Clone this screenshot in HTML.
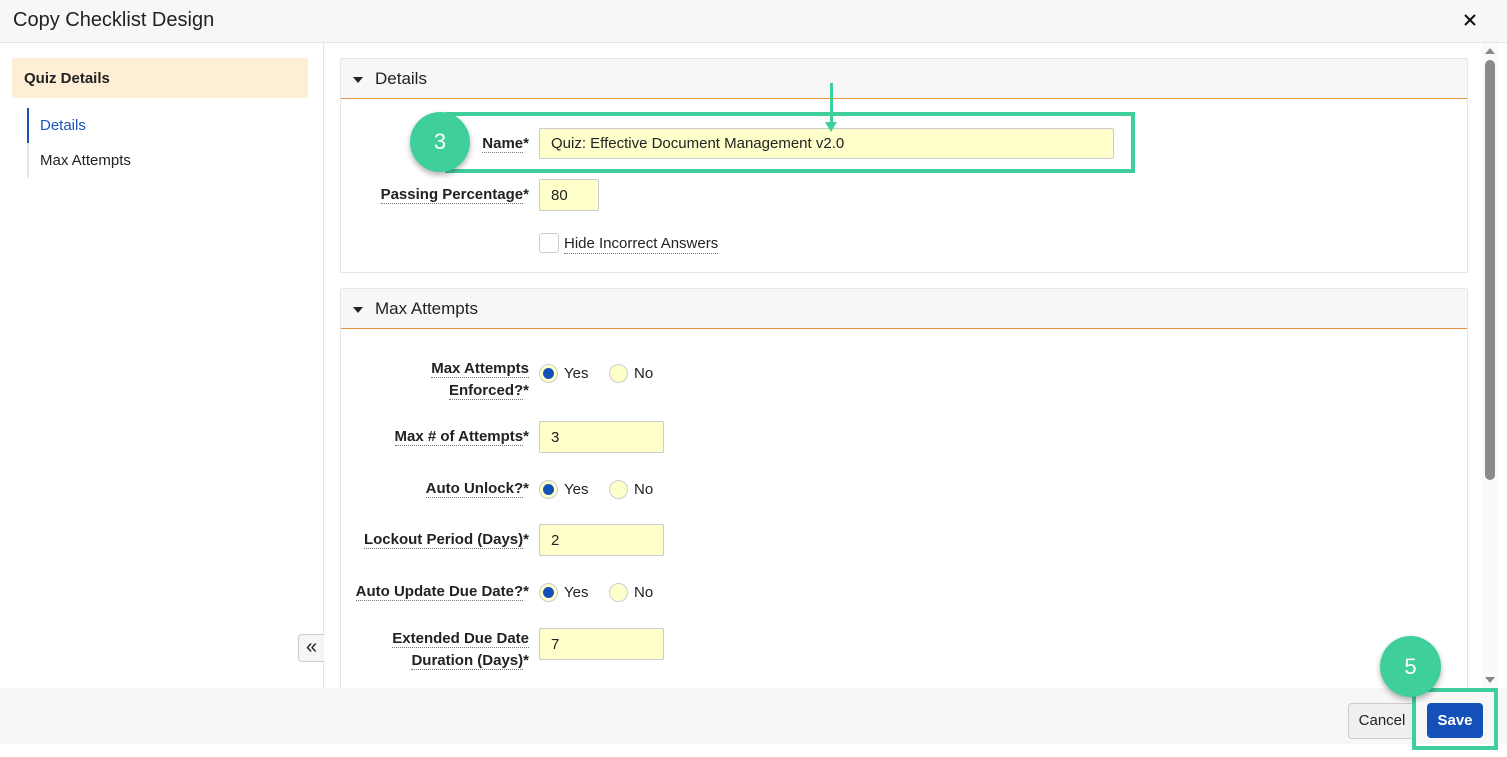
<!DOCTYPE html>
<html><head><meta charset="utf-8"><style>
*{box-sizing:border-box;margin:0;padding:0}
body{width:1507px;height:757px;overflow:hidden;background:#fff;font-family:"Liberation Sans",Arial,sans-serif;color:#222;position:relative;font-size:15px}
.a{position:absolute}
.lbl{position:absolute;right:978px;text-align:right;font-weight:bold;font-size:15px;line-height:22px;color:#222}
.lbl span{border-bottom:1px dotted #777}
.inp{position:absolute;left:539px;background:#ffffcc;border:1px solid #ccc;border-radius:2px;font-size:15px;padding-left:11px;display:flex;align-items:center}
.radio{position:absolute;width:19px;height:19px;border-radius:50%;border:1px solid #ccc;background:#ffffcc}
.radio.on::after{content:"";position:absolute;left:3px;top:3px;width:11px;height:11px;border-radius:50%;background:#1550b8}
.rt{position:absolute;font-size:15px}
.tri{position:absolute;width:0;height:0;border-left:5px solid transparent;border-right:5px solid transparent;border-top:6px solid #222}
</style></head><body>
<div class="a" style="left:0;top:0;width:1507px;height:43px;background:#f7f7f7;border-bottom:1px solid #e6e6e6"></div>
<div class="a" style="left:13px;top:9px;font-size:20px;color:#222">Copy Checklist Design</div>
<svg class="a" style="left:1464px;top:14px" width="12" height="12" viewBox="0 0 12 12"><path d="M1 1L11 11M11 1L1 11" stroke="#111" stroke-width="2"/></svg>
<div class="a" style="left:323px;top:43px;width:1px;height:645px;background:#e6e6e6"></div>
<div class="a" style="left:12px;top:58px;width:296px;height:40px;background:#feeed5;border-radius:2px"></div>
<div class="a" style="left:24px;top:70px;font-weight:bold;font-size:15px">Quiz Details</div>
<div class="a" style="left:27px;top:108px;width:2px;height:70px;background:#e6e6e6"></div>
<div class="a" style="left:27px;top:108px;width:2px;height:35px;background:#1550b8"></div>
<div class="a" style="left:40px;top:117px;font-size:15px;color:#1a55b8">Details</div>
<div class="a" style="left:40px;top:152px;font-size:15px">Max Attempts</div>
<div class="a" style="left:298px;top:634px;width:26px;height:28px;border:1px solid #ccc;border-right:none;border-radius:4px 0 0 4px;background:#f5f5f5;font-size:20px;text-align:center;line-height:24px">«</div>

<div class="a" style="left:340px;top:58px;width:1128px;height:215px;border:1px solid #e6e6e6;border-radius:2px"></div>
<div class="a" style="left:341px;top:59px;width:1126px;height:40px;background:#f7f7f7;border-bottom:1px solid #e8963f"></div>
<div class="tri" style="left:353px;top:77px"></div>
<div class="a" style="left:375px;top:69px;font-size:17px">Details</div>

<div class="a" style="left:340px;top:288px;width:1128px;height:420px;border:1px solid #e6e6e6;border-radius:2px"></div>
<div class="a" style="left:341px;top:289px;width:1126px;height:40px;background:#f7f7f7;border-bottom:1px solid #e8963f"></div>
<div class="tri" style="left:353px;top:307px"></div>
<div class="a" style="left:375px;top:299px;font-size:17px">Max Attempts</div>

<div class="lbl" style="top:133px"><span>Name</span>*</div>
<div class="inp" style="top:128px;width:575px;height:31px">Quiz: Effective Document Management v2.0</div>
<div class="lbl" style="top:184px"><span>Passing Percentage</span>*</div>
<div class="inp" style="top:179px;width:60px;height:32px">80</div>
<div class="a" style="left:539px;top:233px;width:20px;height:20px;border:1px solid #ccc;border-radius:3px;background:#fff"></div>
<div class="a" style="left:564px;top:235px;font-size:15px;border-bottom:1px dotted #777;line-height:18px">Hide Incorrect Answers</div>

<div class="lbl" style="top:358px"><span>Max Attempts</span><br><span>Enforced?</span>*</div>
<div class="radio on" style="left:539px;top:364px"></div><div class="rt" style="left:564px;top:365px">Yes</div>
<div class="radio" style="left:609px;top:364px"></div><div class="rt" style="left:634px;top:365px">No</div>
<div class="lbl" style="top:426px"><span>Max # of Attempts</span>*</div>
<div class="inp" style="top:421px;width:125px;height:32px">3</div>
<div class="lbl" style="top:478px"><span>Auto Unlock?</span>*</div>
<div class="radio on" style="left:539px;top:480px"></div><div class="rt" style="left:564px;top:481px">Yes</div>
<div class="radio" style="left:609px;top:480px"></div><div class="rt" style="left:634px;top:481px">No</div>
<div class="lbl" style="top:529px"><span>Lockout Period (Days)</span>*</div>
<div class="inp" style="top:524px;width:125px;height:32px">2</div>
<div class="lbl" style="top:581px"><span>Auto Update Due Date?</span>*</div>
<div class="radio on" style="left:539px;top:583px"></div><div class="rt" style="left:564px;top:584px">Yes</div>
<div class="radio" style="left:609px;top:583px"></div><div class="rt" style="left:634px;top:584px">No</div>
<div class="lbl" style="top:628px"><span>Extended Due Date</span><br><span>Duration (Days)</span>*</div>
<div class="inp" style="top:628px;width:125px;height:32px">7</div>

<div class="a" style="left:0;top:688px;width:1507px;height:56px;background:#f7f7f7"></div>
<div class="a" style="left:1348px;top:703px;width:68px;height:36px;border:1px solid #ccc;border-radius:4px;background:#efefef;font-size:15px;text-align:center;line-height:34px">Cancel</div>
<div class="a" style="left:1427px;top:703px;width:56px;height:35px;border-radius:4px;background:#1550b8;color:#fff;font-size:15px;font-weight:bold;text-align:center;line-height:35px">Save</div>

<div class="a" style="left:1482px;top:43px;width:16px;height:645px;background:#fafafa"></div>
<div class="a" style="left:1485px;top:48px;width:0;height:0;border-left:5px solid transparent;border-right:5px solid transparent;border-bottom:6px solid #888"></div>
<div class="a" style="left:1485px;top:60px;width:10px;height:420px;background:#8a8a8a;border-radius:5px"></div>
<div class="a" style="left:1485px;top:677px;width:0;height:0;border-left:5px solid transparent;border-right:5px solid transparent;border-top:6px solid #888"></div>

<div class="a" style="left:445px;top:112px;width:690px;height:61px;border:4px solid #3ecf9b"></div>
<div class="a" style="left:830px;top:83px;width:3px;height:45px;background:#3ecf9b"></div>
<div class="a" style="left:825px;top:122px;width:0;height:0;border-left:6px solid transparent;border-right:6px solid transparent;border-top:10px solid #3ecf9b"></div>
<div class="a" style="left:410px;top:112px;width:60px;height:60px;border-radius:50%;background:#3ecf9b;color:#fff;font-size:22px;text-align:center;line-height:60px;box-shadow:0 3px 6px rgba(0,0,0,.3)">3</div>
<div class="a" style="left:1412px;top:688px;width:86px;height:62px;border:4px solid #3ecf9b"></div>
<div class="a" style="left:1380px;top:636px;width:61px;height:61px;border-radius:50%;background:#3ecf9b;color:#fff;font-size:22px;text-align:center;line-height:61px;box-shadow:0 3px 6px rgba(0,0,0,.3)">5</div>
</body></html>
